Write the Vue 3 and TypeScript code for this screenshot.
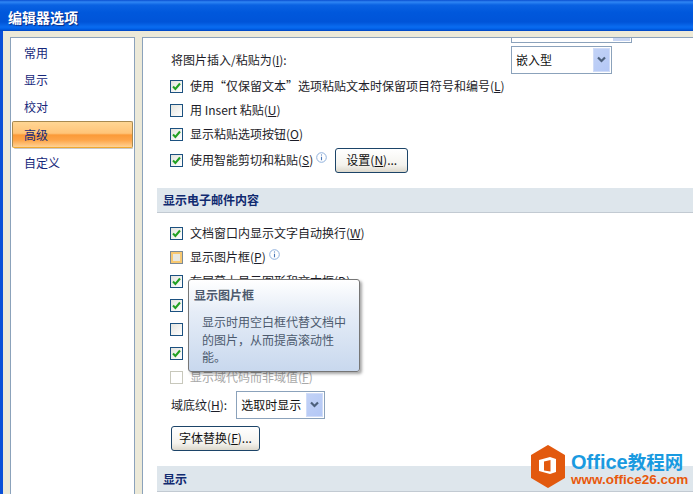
<script setup lang="ts">
interface Item { t?: string; k?: string; e?: string; state: string; info?: boolean }
const nav: string[] = ['常用', '显示', '校对', '高级', '自定义']
const pasteRows: Item[] = [
  { t: '使用“仅保留文本”选项粘贴文本时保留项目符号和编号(', k: 'L', e: ')', state: 'on' },
  { t: '用 Insert 粘贴(', k: 'U', e: ')', state: 'off' },
  { t: '显示粘贴选项按钮(', k: 'O', e: ')', state: 'on' },
]
const mailRows: Item[] = [
  { t: '文档窗口内显示文字自动换行(', k: 'W', e: ')', state: 'on' },
  { t: '显示图片框(', k: 'P', e: ')', state: 'hover', info: true },
  { t: '在屏幕上显示图形和文本框(', k: 'D', e: ')', state: 'on' },
  { state: 'on' },
  { state: 'off' },
  { state: 'on' },
  { t: '显示域代码而非域值(', k: 'F', e: ')', state: 'disabled' },
]
</script>

<template>
  <div class="window">
    <header class="title">编辑器选项</header>
    <div class="body">
      <nav class="nav">
        <div v-for="n in nav" :key="n" class="nav-item" :class="{ active: n === '高级' }">{{ n }}</div>
      </nav>
      <main class="content">
        <div class="stub"><span class="stub-btn"></span></div>
        <div class="select-row">
          <span class="label">将图片插入/粘贴为(<u>I</u>):</span>
          <div class="select wide">
            <span>嵌入型</span>
            <span class="drop"><svg width="11" height="8" viewBox="0 0 11 8"><path d="M2 1.5 5.5 5 9 1.5" fill="none" stroke="#4c607c" stroke-width="2.2"/></svg></span>
          </div>
        </div>
        <div v-for="r in pasteRows" :key="r.t" class="row">
          <span class="box"><svg viewBox="0 0 11 11" width="11" height="11" v-if="r.state === 'on'"><path d="M2 5.5 4.4 8 9 2.5" fill="none" stroke="#22a022" stroke-width="2"/></svg></span>
          <span>{{ r.t }}<u>{{ r.k }}</u>{{ r.e }}</span>
        </div>
        <div class="row tall">
          <span class="box"><svg viewBox="0 0 11 11" width="11" height="11"><path d="M2 5.5 4.4 8 9 2.5" fill="none" stroke="#22a022" stroke-width="2"/></svg></span>
          <span>使用智能剪切和粘贴(<u>S</u>)</span>
          <svg class="info" width="11" height="11" viewBox="0 0 11 11"><circle cx="5.5" cy="5.5" r="4.8" fill="#fff" stroke="#8fb0dc"/><path d="M5.5 2.4v1.2M5.5 4.8v3.4" stroke="#4a78b8" stroke-width="1.1"/></svg>
          <button class="btn settings">设置(<u>N</u>)...</button>
        </div>

        <div class="section first">显示电子邮件内容</div>
        <div class="mail">
          <div v-for="(r, i) in mailRows" :key="i" class="row" :class="{ disabled: r.state === 'disabled' }">
            <span class="box" :class="r.state"><svg viewBox="0 0 11 11" width="11" height="11" v-if="r.state === 'on'"><path d="M2 5.5 4.4 8 9 2.5" fill="none" stroke="#22a022" stroke-width="2"/></svg></span>
            <span v-if="r.t">{{ r.t }}<u>{{ r.k }}</u>{{ r.e }}</span>
            <svg v-if="r.info" class="info" width="11" height="11" viewBox="0 0 11 11"><circle cx="5.5" cy="5.5" r="4.8" fill="#fff" stroke="#8fb0dc"/><path d="M5.5 2.4v1.2M5.5 4.8v3.4" stroke="#4a78b8" stroke-width="1.1"/></svg>
          </div>
          <div class="tooltip">
            <div class="tip-title">显示图片框</div>
            <p>显示时用空白框代替文档中的图片，从而提高滚动性能。</p>
          </div>
        </div>
        <div class="shade-row">
          <span>域底纹(<u>H</u>):</span>
          <div class="select short">
            <span>选取时显示</span>
            <span class="drop"><svg width="11" height="8" viewBox="0 0 11 8"><path d="M2 1.5 5.5 5 9 1.5" fill="none" stroke="#4c607c" stroke-width="2.2"/></svg></span>
          </div>
        </div>
        <button class="btn font-btn">字体替换(<u>F</u>)...</button>
        <div class="section last">显示</div>
      </main>
    </div>
    <div class="logo">
      <svg width="36" height="44" viewBox="0 0 36 44">
        <path d="M18 1 34 10.500v22L18 42 2 32.500v-22Z" fill="#e2590e" stroke="#e2590e" stroke-width="2" stroke-linejoin="round"/>
        <path d="M9 15 20 12l6 2v13l-6 2-11-3Z" fill="#fff"/>
        <path d="M14 16.500 20.500 15v11.500l-6.500-1Z" fill="#e2590e"/>
      </svg>
      <div class="logo-text">
        <div class="brand">Office<span>教程网</span></div>
        <div class="url">www.office26.com</div>
      </div>
    </div>
  </div>
</template>

<style scoped>
.window {
  position: relative;
  width: 693px;
  height: 494px;
  overflow: hidden;
  display: flex;
  flex-direction: column;
  background: #ece9d8;
  font: 12px/1.2 "Noto Sans CJK SC", "Liberation Sans", sans-serif;
  color: #1c1c28;
}
.title {
  height: 31px;
  flex: none;
  box-sizing: border-box;
  padding: 9px 0 0 8px;
  font-size: 14px;
  line-height: 16px;
  font-weight: 700;
  color: #fff;
  text-shadow: 1px 1px 1px #0a2a80;
  background: linear-gradient(#0a4fd0 0, #2f86f4 2px, #0a62e2 5px, #0058dc 12px, #0054d8 22px, #0a6cf0 27px, #0060e8 29px, #0044c0 31px);
}
.body {
  flex: 1;
  min-height: 0;
  display: flex;
  gap: 7px;
  padding: 6px 0 0 7px;
  border-left: 3px solid #0a50d8;
}
.nav {
  width: 125px;
  flex: none;
  box-sizing: border-box;
  background: #fff;
  border: 1px solid #8ba2bb;
  border-bottom: 0;
  padding: 1px;
  color: #16277a;
}
.nav-item {
  height: 27px;
  line-height: 27px;
  padding-left: 12px;
}
.nav-item:last-child { margin-top: 1px; }
.nav-item.active {
  margin-top: 1px;
  height: 27px;
  padding-left: 11px;
  box-sizing: border-box;
  border: 1px solid #a88a50;
  border-bottom-color: #f0a830;
  border-radius: 2px;
  line-height: 25px;
  background: linear-gradient(#ffd694, #ffc478 45%, #fb9a38 52%, #fda448 72%, #ffd294);
  box-shadow: 1px 2px 0 -1px #c8c8c8;
}
.content {
  flex: 1;
  min-width: 0;
  box-sizing: border-box;
  background: #fff;
  border-top: 1px solid #8ba2bb;
  border-left: 1px solid #8ba2bb;
  padding-left: 14px;
}
.stub {
  margin-left: 354px;
  width: 121px;
  height: 5px;
  box-sizing: border-box;
  border: 1px solid #8ba2bb;
  border-top: 0;
  display: flex;
  justify-content: flex-end;
  padding-right: 1px;
}
.stub-btn {
  width: 17px;
  height: 3px;
  background: #c8d6f4;
}
.select-row {
  display: flex;
  align-items: center;
  margin-top: 3px;
  padding-left: 14px;
}
.label { width: 340px; }
.select {
  box-sizing: border-box;
  height: 28px;
  border: 1px solid #8ba2bb;
  display: flex;
  align-items: center;
  justify-content: space-between;
  padding: 1px 1px 1px 4px;
  font-size: 12px;
  color: #111;
}
.select.wide { width: 101px; }
.select.short { width: 89px; }
.drop {
  align-self: stretch;
  width: 17px;
  display: flex;
  align-items: center;
  justify-content: center;
  background: linear-gradient(135deg, #c2d2f6, #b4c8f6);
  border: 1px solid #d0dcf8;
  box-sizing: border-box;
}
.row {
  height: 24px;
  display: flex;
  align-items: center;
  gap: 7px;
  padding-left: 13px;
}
.row.tall {
  height: 28px;
  position: relative;
}
.box {
  width: 13px;
  height: 13px;
  flex: none;
  box-sizing: border-box;
  border: 1px solid #1c5180;
  background: linear-gradient(135deg, #e4e4de, #fff);
  display: flex;
  align-items: center;
  justify-content: center;
}
.box.hover {
  border-color: #7c8a96;
  background: #e8e8e0;
  box-shadow: inset 0 0 0 2px #f8c870;
}
.box.disabled {
  background: #fff;
  border-color: #c8c8bc;
}
.row.disabled { color: #a8a8a8; }
.info {
  flex: none;
  margin: -6px 0 0 -4px;
}
.btn {
  font: inherit;
  color: #111;
  height: 25px;
  border: 1px solid #1c4468;
  border-radius: 3px;
  background: linear-gradient(#fff, #f4f3ee 70%, #dcd8cc);
  padding: 0;
}
.settings {
  width: 73px;
  margin-left: 1px;
}
.section {
  background: #dee6ec;
  border-bottom: 1px solid #c2cad2;
  font-weight: 700;
  color: #102a70;
  padding-left: 6px;
}
.section.first {
  margin-top: 14px;
  height: 25px;
  line-height: 24px;
  box-sizing: border-box;
}
.section.last {
  margin-top: 15px;
  height: 26px;
  line-height: 25px;
  box-sizing: border-box;
}
.mail {
  position: relative;
  margin-top: 8px;
}
.tooltip {
  position: absolute;
  left: 31px;
  top: 58px;
  width: 172px;
  height: 93px;
  box-sizing: border-box;
  border: 1px solid #767676;
  border-radius: 3px;
  background: linear-gradient(#fff, #e6edf7 35%, #c8d8ee);
  box-shadow: 2px 2px 3px rgba(0, 0, 0, .35);
  padding: 7px 5px;
  color: #4c5a6e;
}
.tip-title {
  font-weight: 700;
  line-height: 16px;
}
.tooltip p {
  margin: 10px 6px 0 8px;
  line-height: 17.500px;
}
.shade-row {
  display: flex;
  align-items: center;
  gap: 9px;
  margin-top: 2px;
  padding-left: 14px;
}
.font-btn {
  display: block;
  width: 89px;
  margin: 7px 0 0 14px;
}
.logo {
  position: absolute;
  left: 530px;
  top: 445px;
  display: flex;
  gap: 5px;
}
.logo-text {
  padding-top: 6px;
}
.brand {
  font: 700 20px/20px "Liberation Sans", sans-serif;
  color: #1a9ae0;
  white-space: nowrap;
}
.brand span {
  font: 700 18.500px/20px "Noto Sans CJK SC", sans-serif;
}
.url {
  font: 700 13.500px/15px "Liberation Sans", sans-serif;
  color: #e8590c;
  white-space: nowrap;
}
</style>
